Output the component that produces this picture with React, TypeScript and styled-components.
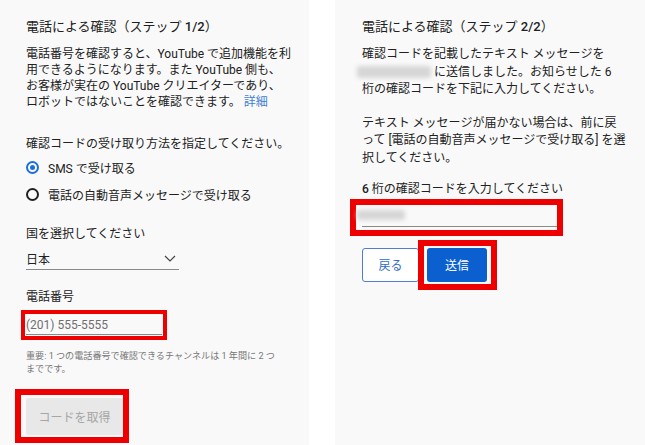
import React from 'react';
import styled, { createGlobalStyle } from 'styled-components';

const GlobalStyle = createGlobalStyle`
  html, body {
    margin: 0;
    padding: 0;
    background: #ffffff;
  }
  body {
    font-family: Roboto, "Noto Sans CJK JP", sans-serif;
    color: #212121;
  }
`;

const App: React.FC = () => {
  return (
    <>
      <GlobalStyle />
      <Page>
        <Panel $padLeft={26}>
          <Title>
            電話による確認（ステップ <Num>1/2</Num>）
          </Title>
          <Text $lh={16}>
            電話番号を確認すると、YouTube で追加機能を利
            <br />
            用できるようになります。また YouTube 側も、
            <br />
            お客様が実在の YouTube クリエイターであり、
            <br />
            ロボットではないことを確認できます。 <LearnMore href="#">詳細</LearnMore>
          </Text>

          <Text $lh={16} $mt={26}>
            確認コードの受け取り方法を指定してください。
          </Text>
          <RadioList>
            <RadioRow>
              <Radio $checked />
              SMS で受け取る
            </RadioRow>
            <RadioRow>
              <Radio />
              電話の自動音声メッセージで受け取る
            </RadioRow>
          </RadioList>

          <Text $lh={16} $mt={18}>
            国を選択してください
          </Text>
          <Select>
            日本
            <svg width="12" height="7" viewBox="0 0 12 7">
              <polyline points="1,1 6,6 11,1" fill="none" stroke="#444" strokeWidth="1.2" />
            </svg>
          </Select>

          <Text $lh={16} $mt={19}>
            電話番号
          </Text>
          <Highlight $border={4} $pad="1px 1px 1px 1px" $mt={5} $ml={-5}>
            <PhoneInput>(201) 555-5555</PhoneInput>
          </Highlight>

          <Note>
            重要: 1 つの電話番号で確認できるチャンネルは 1 年間に 2 つ
            <br />
            までです。
          </Note>

          <Highlight $border={6} $pad="3px 0 2px 5px" $mt={13} $ml={-11}>
            <DisabledButton disabled>コードを取得</DisabledButton>
          </Highlight>
        </Panel>

        <Panel $padLeft={27}>
          <Title>
            電話による確認（ステップ <Num>2/2</Num>）
          </Title>
          <Text $lh={17.5}>
            確認コードを記載したテキスト メッセージを
            <br />
            <Redacted $w={74} $h={12} />
            {' '}に送信しました。お知らせした 6
            <br />
            桁の確認コードを下記に入力してください。
          </Text>
          <Text $lh={17.5} $mt={16}>
            テキスト メッセージが届かない場合は、前に戻
            <br />
            って [電話の自動音声メッセージで受け取る] を選
            <br />
            択してください。
          </Text>

          <Text $lh={17.5} $mt={14}>
            <Num>6</Num> 桁の確認コードを入力してください
          </Text>
          <Highlight $border={6} $pad="0 0 3px 6px" $ml={-12}>
            <CodeInput>
              <Redacted $w={48} $h={10} />
            </CodeInput>
          </Highlight>

          <ButtonRow>
            <OutlineButton>戻る</OutlineButton>
            <Highlight $border={6} $pad="2px 4px 2px 3px" $ml={-1}>
              <PrimaryButton>送信</PrimaryButton>
            </Highlight>
          </ButtonRow>
        </Panel>
      </Page>
    </>
  );
};

const Page = styled.div`
  display: flex;
  gap: 26px;
  width: 645px;
  height: 445px;
  overflow: hidden;
`;

const Panel = styled.section<{ $padLeft: number }>`
  flex: 1;
  display: flex;
  flex-direction: column;
  align-items: flex-start;
  padding: 18px 0 0 ${(p) => p.$padLeft}px;
  background: #f9f9f9;
  box-sizing: border-box;
`;

const Title = styled.h2`
  margin: 0 0 10px;
  font-size: 13px;
  line-height: 18px;
  font-weight: 400;
  color: #202020;
  white-space: nowrap;
`;

const Num = styled.span`
  font-weight: 500;
`;

const Text = styled.p<{ $lh: number; $mt?: number }>`
  margin: ${(p) => p.$mt ?? 0}px 0 0;
  font-size: 12px;
  line-height: ${(p) => p.$lh}px;
  color: #212121;
  white-space: nowrap;
`;

const LearnMore = styled.a`
  color: #3f7fd6;
  text-decoration: none;
`;

const RadioList = styled.div`
  display: flex;
  flex-direction: column;
  margin-top: 2px;
`;

const RadioRow = styled.label`
  display: flex;
  align-items: center;
  gap: 9px;
  height: 27px;
  font-size: 12px;
  color: #212121;
`;

const Radio = styled.span<{ $checked?: boolean }>`
  position: relative;
  width: 13px;
  height: 13px;
  border-radius: 50%;
  border: 2px solid ${(p) => (p.$checked ? '#1a6fdc' : '#202020')};
  box-sizing: border-box;

  &::after {
    content: '';
    position: absolute;
    inset: 2px;
    border-radius: 50%;
    background: ${(p) => (p.$checked ? '#1a6fdc' : 'transparent')};
  }
`;

const Select = styled.div`
  display: flex;
  align-items: center;
  justify-content: space-between;
  width: 153px;
  height: 22px;
  margin-top: 6px;
  padding-right: 3px;
  box-sizing: border-box;
  border-bottom: 1px solid #8a8a8a;
  font-size: 12px;
  color: #212121;
`;

const Highlight = styled.div<{ $border: number; $pad: string; $mt?: number; $ml?: number }>`
  display: inline-flex;
  align-items: center;
  border: ${(p) => p.$border}px solid #ee0000;
  padding: ${(p) => p.$pad};
  margin-top: ${(p) => p.$mt ?? 0}px;
  margin-left: ${(p) => p.$ml ?? 0}px;
`;

const PhoneInput = styled.div`
  display: flex;
  align-items: center;
  width: 136px;
  height: 20px;
  box-sizing: border-box;
  border-bottom: 1px solid #8a8a8a;
  font-size: 12px;
  color: #6f6f6f;
`;

const Note = styled.p`
  margin: 10px 0 0;
  font-size: 9.1px;
  line-height: 13px;
  color: #777777;
  white-space: nowrap;
`;

const DisabledButton = styled.button`
  width: 97px;
  height: 37px;
  border: none;
  border-radius: 2px;
  background: #e8e8e8;
  color: #a6a6a6;
  font-family: inherit;
  font-size: 12px;
`;

const Redacted = styled.span<{ $w: number; $h: number }>`
  display: inline-block;
  vertical-align: middle;
  width: ${(p) => p.$w}px;
  height: ${(p) => p.$h}px;
  margin-left: -5px;
  background: #d6d6d6;
  border-radius: 3px;
  filter: blur(2px);
`;

const CodeInput = styled.div`
  display: flex;
  align-items: center;
  width: 195px;
  height: 22px;
  box-sizing: border-box;
  border-bottom: 1px solid #8a8a8a;
`;

const ButtonRow = styled.div`
  display: flex;
  align-items: center;
  margin-top: 4px;
`;

const OutlineButton = styled.button`
  width: 57px;
  height: 34px;
  border: 1px solid #4d80cc;
  border-radius: 3px;
  background: #ffffff;
  color: #2f6bc9;
  font-family: inherit;
  font-size: 12px;
`;

const PrimaryButton = styled.button`
  width: 60px;
  height: 34px;
  border: none;
  border-radius: 3px;
  background: #0b5fcf;
  color: #ffffff;
  font-family: inherit;
  font-size: 12px;
`;

export default App;
